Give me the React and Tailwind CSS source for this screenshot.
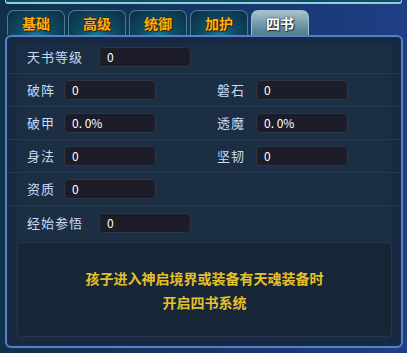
import React from "react";

const font = { fontFamily: '"Noto Sans CJK SC", "Noto Sans", sans-serif' };

function Tab({ label, active }) {
  return (
    <div
      className={
        "w-[58px] h-[25px] rounded-t-[7px] border border-b-0 flex items-center justify-center text-[14px] font-bold " +
        (active
          ? "border-[#9cc0cc] bg-[linear-gradient(to_bottom,#a9c4cd,#6f95a6_60%,#4f7d92)] text-white [text-shadow:0_0_2px_#1b2a33,1px_1px_1px_#1b2a33]"
          : "border-[#4d7c90] bg-[radial-gradient(ellipse_at_50%_100%,#0f78a0_0%,#0d4a66_45%,#0e2d40_100%)] text-[#ffad0a] [text-shadow:1px_1px_1px_#3a1c00,0_0_2px_#3a1c00]")
      }
    >
      {label}
    </div>
  );
}

function Field({ label, value, labelW }) {
  return (
    <div className="flex items-center">
      <div className={"text-[13px] text-[#c9dbf4] tracking-[1px] " + labelW}>{label}</div>
      <div className="w-[92px] h-[20px] rounded-[4px] bg-[#1c1d28] border border-[#2b3647] flex items-center pl-[7px] text-[12px] text-white">
        {value}
      </div>
    </div>
  );
}

function Row({ children, last }) {
  return (
    <div className={"h-[33px] flex items-center pl-[20px] " + (last ? "" : "border-b border-[#24394e]")}>
      {children}
    </div>
  );
}

export default function App() {
  return (
    <div
      style={font}
      className="w-[407px] h-[353px] overflow-hidden bg-[linear-gradient(to_right,#10314a,#17366a_55%,#1f3e86)] flex flex-col"
    >
      <div className="mx-[5px] h-[4px] rounded-b-[3px] bg-[#1a4a60] border-b-2 border-x border-[#86d3de]" />
      <div className="flex gap-[3px] pl-[7px] mt-[6px]">
        <Tab label="基础" />
        <Tab label="高级" />
        <Tab label="统御" />
        <Tab label="加护" />
        <Tab label="四书" active />
      </div>
      <div className="mx-[5px] w-[398px] h-[313px] rounded-[6px] border-2 border-[#5580c2] bg-[#1b2e44] shadow-[inset_0_0_0_2px_#18294a,inset_0_0_10px_4px_#152540] flex flex-col pt-[4px]">
        <Row>
          <Field label="天书等级" value="0" labelW="w-[72px]" />
        </Row>
        <Row>
          <div className="w-[190px]">
            <Field label="破阵" value="0" labelW="w-[37px]" />
          </div>
          <Field label="磐石" value="0" labelW="w-[39px]" />
        </Row>
        <Row>
          <div className="w-[190px]">
            <Field label="破甲" value="0. 0%" labelW="w-[37px]" />
          </div>
          <Field label="透魔" value="0. 0%" labelW="w-[39px]" />
        </Row>
        <Row>
          <div className="w-[190px]">
            <Field label="身法" value="0" labelW="w-[37px]" />
          </div>
          <Field label="坚韧" value="0" labelW="w-[39px]" />
        </Row>
        <Row>
          <Field label="资质" value="0" labelW="w-[37px]" />
        </Row>
        <Row last>
          <Field label="经始参悟" value="0" labelW="w-[72px]" />
        </Row>
        <div className="mt-[3px] ml-[10px] mr-[9px] h-[95px] rounded-[4px] bg-[#172637] border border-[#22364c] flex flex-col items-center justify-center gap-[3px] text-[14px] font-bold text-[#e6c02a] pt-[2px]">
          <div>孩子进入神启境界或装备有天魂装备时</div>
          <div>开启四书系统</div>
        </div>
      </div>
    </div>
  );
}
